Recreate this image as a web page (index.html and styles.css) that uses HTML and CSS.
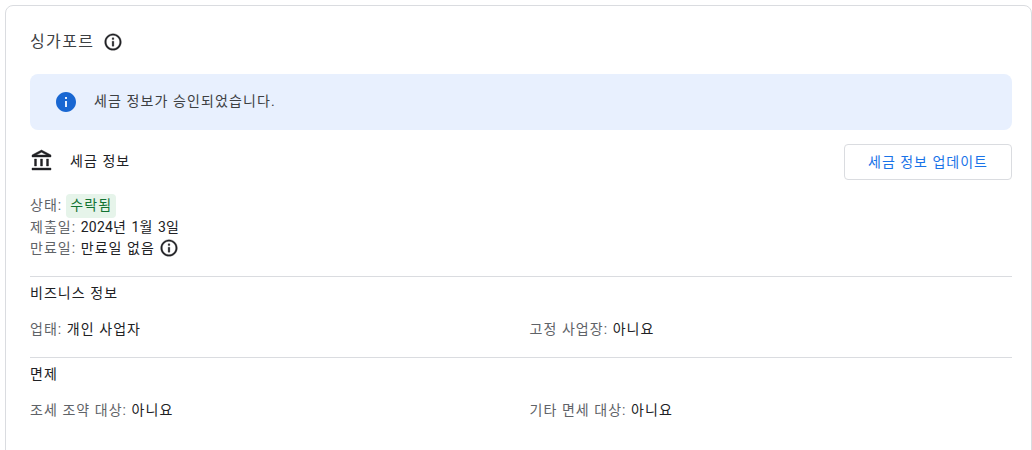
FILE: index.html
```html
<!DOCTYPE html>
<html lang="ko">
<head>
<meta charset="utf-8">
<title>세금 정보</title>
<link rel="stylesheet" href="styles.css">
</head>
<body>
<main class="card">
  <header class="title-row">
    <h1 class="title">싱가포르</h1>
    <svg class="info" viewBox="0 0 24 24"><path d="M11 7h2v2h-2zm0 4h2v6h-2zm1-9C6.48 2 2 6.48 2 12s4.48 10 10 10 10-4.48 10-10S17.52 2 12 2zm0 18c-4.41 0-8-3.59-8-8s3.59-8 8-8 8 3.59 8 8-3.59 8-8 8z"/></svg>
  </header>
  <div class="alert">
    <svg class="alert-icon" viewBox="0 0 24 24"><path d="M12 2C6.48 2 2 6.48 2 12s4.48 10 10 10 10-4.48 10-10S17.52 2 12 2zm1 15h-2v-6h2v6zm0-8h-2V7h2v2z"/></svg>
    <span class="alert-text">세금 정보가 승인되었습니다.</span>
  </div>
  <section class="tax">
    <div class="tax-head">
      <div class="tax-title">
        <svg class="bank" viewBox="0 0 24 24"><path d="M6.5 10h-2v7h2v-7zm6 0h-2v7h2v-7zm8.5 9H2v2h19v-2zm-2.500-9h-2v7h2v-7zm-7-6.740L16.710 6H6.290l5.210-2.740m0-2.260L2 6v2h19V6l-9.500-5z"/></svg>
        <span class="tax-name">세금 정보</span>
      </div>
      <button class="update" type="button">세금 정보 업데이트</button>
    </div>
    <ul class="status">
      <li class="status-first"><span class="label">상태:</span><span class="chip">수락됨</span></li>
      <li><span class="label">제출일:</span> <span class="num">2024</span>년 <span class="num">1</span>월 <span class="num">3</span>일</li>
      <li class="expiry"><span><span class="label">만료일:</span> 만료일 없음</span>
        <svg class="info" viewBox="0 0 24 24"><path d="M11 7h2v2h-2zm0 4h2v6h-2zm1-9C6.48 2 2 6.48 2 12s4.48 10 10 10 10-4.48 10-10S17.52 2 12 2zm0 18c-4.41 0-8-3.59-8-8s3.59-8 8-8 8 3.59 8 8-3.59 8-8 8z"/></svg>
      </li>
    </ul>
  </section>
  <section class="block">
    <h2 class="block-title">비즈니스 정보</h2>
    <div class="cols">
      <div><span class="label">업태:</span> 개인 사업자</div>
      <div><span class="label">고정 사업장:</span> 아니요</div>
    </div>
  </section>
  <section class="block">
    <h2 class="block-title">면제</h2>
    <div class="cols">
      <div><span class="label">조세 조약 대상:</span> 아니요</div>
      <div><span class="label">기타 면세 대상:</span> 아니요</div>
    </div>
  </section>
</main>
</body>
</html>
```

FILE: styles.css
```css
* { box-sizing: border-box; }
html, body { margin: 0; height: 450px; overflow: hidden; background: #fff; }
body {
  padding: 5px 0 0 5px;
  font-family: Roboto, "Noto Sans CJK KR", sans-serif;
  font-size: 14px;
  line-height: 20px;
  letter-spacing: 1.05px;
  color: #202124;
}
.card {
  height: 460px;
  padding: 24px 19px 0 24px;
  border: 1px solid #dadce0;
  border-radius: 8px;
  background: #fff;
}
.title-row { display: flex; align-items: center; gap: 9px; height: 24px; margin-bottom: 20px; }
.title { margin: 0; font-size: 16px; font-weight: 400; line-height: 24px; letter-spacing: 1.35px; color: #3c4043; }
.info { width: 20px; height: 20px; fill: #202124; stroke: #202124; stroke-width: .35; flex: none; }
.alert {
  display: flex;
  align-items: center;
  gap: 16px;
  height: 56px;
  padding: 0 24px;
  border-radius: 8px;
  background: #e8f0fe;
  color: #3c4043;
  margin-bottom: 14px;
}
.alert-text { margin-top: -2px; letter-spacing: 1.1px; }
.alert-icon { width: 24px; height: 24px; fill: #1967d2; flex: none; }
.tax-head { display: flex; justify-content: space-between; align-items: center; }
.tax-title { display: flex; align-items: center; gap: 16px; height: 24px; margin-top: -2px; }
.tax-name { margin-top: -1px; }
.bank { width: 24px; height: 24px; fill: #202124; stroke: #202124; stroke-width: .4; }
.update {
  width: 168px;
  height: 36px;
  border: 1px solid #dadce0;
  border-radius: 4px;
  background: #fff;
  color: #1a73e8;
  font: inherit;
  letter-spacing: 1px;
}
.status { list-style: none; margin: 14px 0 0; padding: 0; }
.status-first { display: flex; align-items: flex-start; gap: 4px; height: 23px; line-height: 22px; }
.num { letter-spacing: .2px; }
.label { color: #5f6368; }
.chip {
  height: 24px;
  padding: 0 4px;
  border-radius: 4px;
  background: #e6f4ea;
  color: #137333;
  line-height: 22px;
}
.expiry { display: flex; align-items: center; gap: 4px; margin-top: 1px; }
.block { margin-top: 18px; border-top: 1px solid #dadce0; }
.block-title { margin: 6px 0 0; font-size: 14px; font-weight: 400; line-height: 20px; }
.cols { display: grid; grid-template-columns: 1fr 1fr; column-gap: 17px; margin-top: 16px; }
```
